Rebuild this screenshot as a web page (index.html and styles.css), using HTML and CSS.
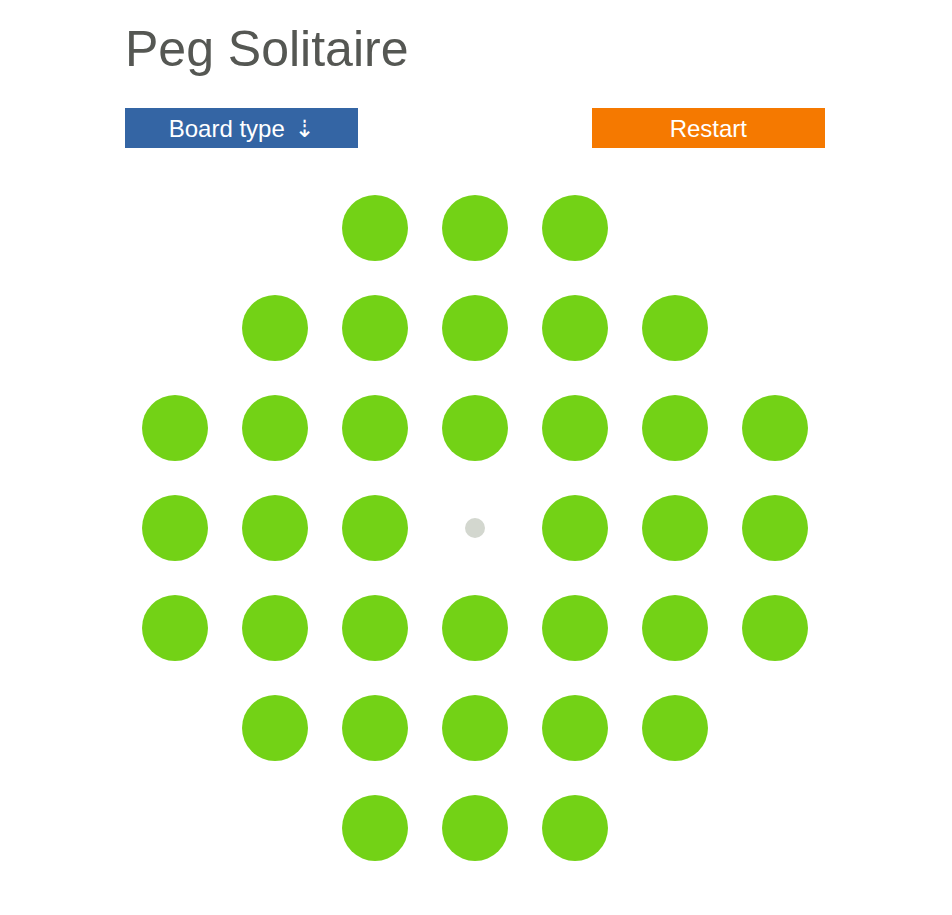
FILE: index.html
```html
<!DOCTYPE html>
<html lang="en">
<head>
<meta charset="utf-8">
<title>Peg Solitaire</title>
<link rel="stylesheet" href="styles.css">
</head>
<body>
<div class="app">
  <h1 class="title">Peg Solitaire</h1>
  <div class="controls">
    <button class="btn btn-board">Board type <span class="arrow">⇣</span></button>
    <span class="spacer"></span>
    <button class="btn btn-restart">Restart</button>
  </div>
  <div class="board">
    <div class="cell"></div><div class="cell"></div><div class="cell"><span class="peg"></span></div><div class="cell"><span class="peg"></span></div><div class="cell"><span class="peg"></span></div><div class="cell"></div><div class="cell"></div>
    <div class="cell"></div><div class="cell"><span class="peg"></span></div><div class="cell"><span class="peg"></span></div><div class="cell"><span class="peg"></span></div><div class="cell"><span class="peg"></span></div><div class="cell"><span class="peg"></span></div><div class="cell"></div>
    <div class="cell"><span class="peg"></span></div><div class="cell"><span class="peg"></span></div><div class="cell"><span class="peg"></span></div><div class="cell"><span class="peg"></span></div><div class="cell"><span class="peg"></span></div><div class="cell"><span class="peg"></span></div><div class="cell"><span class="peg"></span></div>
    <div class="cell"><span class="peg"></span></div><div class="cell"><span class="peg"></span></div><div class="cell"><span class="peg"></span></div><div class="cell"><span class="hole"></span></div><div class="cell"><span class="peg"></span></div><div class="cell"><span class="peg"></span></div><div class="cell"><span class="peg"></span></div>
    <div class="cell"><span class="peg"></span></div><div class="cell"><span class="peg"></span></div><div class="cell"><span class="peg"></span></div><div class="cell"><span class="peg"></span></div><div class="cell"><span class="peg"></span></div><div class="cell"><span class="peg"></span></div><div class="cell"><span class="peg"></span></div>
    <div class="cell"></div><div class="cell"><span class="peg"></span></div><div class="cell"><span class="peg"></span></div><div class="cell"><span class="peg"></span></div><div class="cell"><span class="peg"></span></div><div class="cell"><span class="peg"></span></div><div class="cell"></div>
    <div class="cell"></div><div class="cell"></div><div class="cell"><span class="peg"></span></div><div class="cell"><span class="peg"></span></div><div class="cell"><span class="peg"></span></div><div class="cell"></div><div class="cell"></div>
  </div>
</div>
</body>
</html>
```

FILE: styles.css
```css
html, body {
  margin: 0;
  padding: 0;
  background: #ffffff;
}

body {
  padding-right: 2px;
  font-family: "Liberation Sans", Arial, sans-serif;
  color: #555753;
}

.app {
  width: 700px;
  margin: 0 auto;
  padding-top: 20px;
}

.title {
  margin: 0;
  font-family: "Liberation Sans", Arial, sans-serif;
  font-size: 50px;
  line-height: 58px;
  font-weight: normal;
  color: #555753;
}

.controls {
  display: grid;
  grid-template-columns: 1fr 1fr 1fr;
  margin-top: 30px;
  height: 40px;
}

.btn {
  border: 0;
  margin: 0;
  padding: 1px 0 0;
  height: 40px;
  font-family: "Liberation Sans", Arial, sans-serif;
  font-size: 24px;
  line-height: 39px;
  color: #ffffff;
  cursor: pointer;
}

.btn-board {
  background: #3465a4;
}

.btn-restart {
  background: #f57900;
}

.arrow {
  margin-left: 3px;
  font-family: "DejaVu Sans", sans-serif;
  font-size: 24px;
  line-height: 1;
}

.board {
  display: grid;
  grid-template-columns: repeat(7, 100px);
  grid-template-rows: repeat(7, 100px);
  margin-top: 30px;
}

.cell {
  display: flex;
  align-items: center;
  justify-content: center;
}

.peg {
  width: 66px;
  height: 66px;
  border-radius: 50%;
  background: #73d216;
}

.hole {
  width: 20px;
  height: 20px;
  border-radius: 50%;
  background: #d3d7cf;
}
```
